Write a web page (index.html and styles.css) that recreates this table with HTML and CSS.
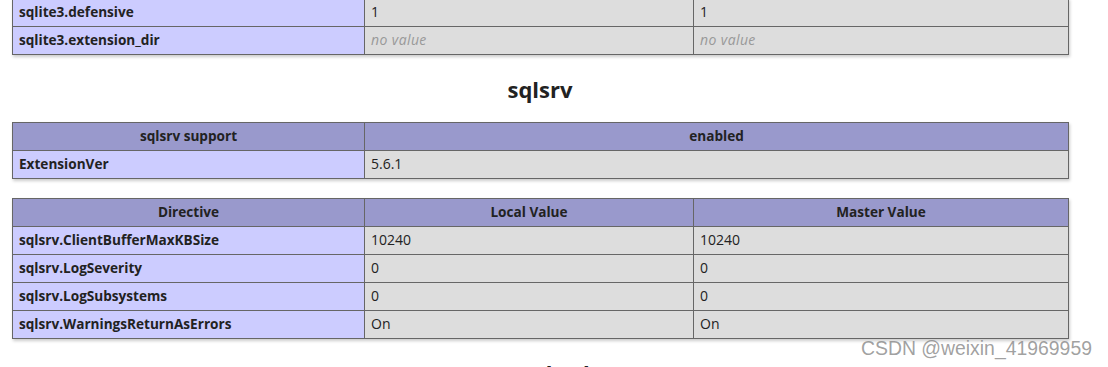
FILE: index.html
```html
<!DOCTYPE html>
<html lang="en">
<head>
    <meta charset="UTF-8">
    <title>phpinfo()</title>
    <link rel="stylesheet" href="styles.css">
</head>
<body>
    <div class="center">
        <table class="first">
            <colgroup><col class="c1"><col class="c2"><col class="c3"></colgroup>
            <tr><td class="e">sqlite3.defensive</td><td class="v">1</td><td class="v">1</td></tr>
            <tr><td class="e">sqlite3.extension_dir</td><td class="v"><i>no value</i></td><td class="v"><i>no value</i></td></tr>
        </table>

        <h2>sqlsrv</h2>

        <table>
            <colgroup><col class="c1"><col class="c2"><col class="c3"></colgroup>
            <tr class="h"><th>sqlsrv support</th><th colspan="2">enabled</th></tr>
            <tr><td class="e">ExtensionVer</td><td class="v" colspan="2">5.6.1</td></tr>
        </table>

        <table class="next">
            <colgroup><col class="c1"><col class="c2"><col class="c3"></colgroup>
            <tr class="h"><th>Directive</th><th>Local Value</th><th>Master Value</th></tr>
            <tr><td class="e">sqlsrv.ClientBufferMaxKBSize</td><td class="v">10240</td><td class="v">10240</td></tr>
            <tr><td class="e">sqlsrv.LogSeverity</td><td class="v">0</td><td class="v">0</td></tr>
            <tr><td class="e">sqlsrv.LogSubsystems</td><td class="v">0</td><td class="v">0</td></tr>
            <tr><td class="e">sqlsrv.WarningsReturnAsErrors</td><td class="v">On</td><td class="v">On</td></tr>
        </table>

        <h2 class="last">standard</h2>
    </div>

    <div class="watermark">CSDN @weixin_41969959</div>
</body>
</html>
```

FILE: styles.css
```css
* {
    margin: 0;
    padding: 0;
    box-sizing: border-box;
}

body {
    font-family: 'Open Sans', 'Noto Sans', sans-serif;
    background: #fff;
    color: #222;
    overflow: hidden;
}

.center {
    width: 1056px;
    margin-left: 12px;
}

table {
    border-collapse: collapse;
    table-layout: fixed;
    width: 1056px;
    box-shadow: 1px 2px 3px #ccc;
}

table.first {
    margin-top: -2px;
}

table.next {
    margin-top: 19px;
}

col.c1 { width: 352px; }
col.c2 { width: 329px; }
col.c3 { width: 375px; }

td, th {
    border: 1px solid #666;
    font-size: 14px;
    line-height: 19px;
    padding: 3px 6px 5px;
    vertical-align: middle;
    text-align: left;
    white-space: nowrap;
}

.h {
    background-color: #99c;
}

.h th {
    font-weight: bold;
    font-size: 13.6px;
    text-align: center;
}

.e {
    background-color: #ccf;
    font-weight: bold;
    font-size: 13.6px;
}

.v {
    background-color: #ddd;
}

.v i {
    color: #999;
    letter-spacing: 0.4px;
}

h2 {
    font-size: 22px;
    line-height: 32px;
    text-align: center;
    margin: 18px 0 17px;
}

h2.last {
    margin-top: 18px;
}

.watermark {
    position: absolute;
    left: 861px;
    top: 337px;
    font-family: 'Liberation Sans', Arial, sans-serif;
    font-size: 19.4px;
    line-height: 22px;
    color: rgba(130, 130, 130, 0.75);
    white-space: nowrap;
}
```
